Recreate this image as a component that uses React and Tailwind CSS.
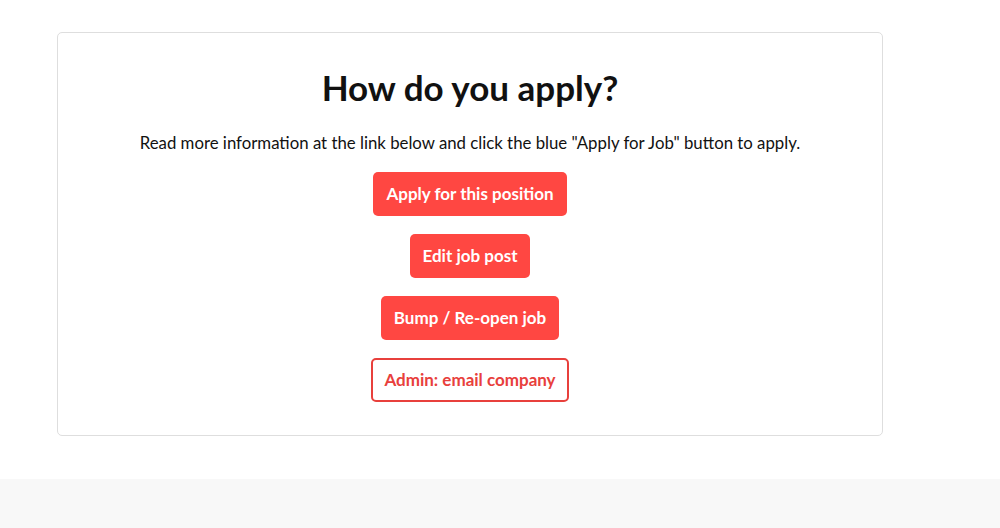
import React from 'react';

const buttons = [
  { label: 'Apply for this position', outline: false },
  { label: 'Edit job post', outline: false },
  { label: 'Bump / Re-open job', outline: false },
  { label: 'Admin: email company', outline: true },
];

export default function App() {
  return (
    <div className="min-h-[528px] bg-white flex flex-col" style={{ fontFamily: 'Lato, "Noto Sans", sans-serif' }}>
      <div className="h-[479px] pt-[32px] pl-[57px]">
        <div className="w-[826px] h-[404px] border border-[#dedede] rounded-[5px] bg-white flex flex-col items-center pt-[34px]">
          <h1 className="text-[35px] leading-[40px] font-bold text-[#111]">How do you apply?</h1>
          <p className="mt-[24px] text-[16.8px] leading-[24px] text-[#111]">
            Read more information at the link below and click the blue "Apply for Job" button to apply.
          </p>
          <div className="mt-[17px] flex flex-col items-center gap-[18px]">
            {buttons.map((b) => (
              <button
                key={b.label}
                type="button"
                className={
                  b.outline
                    ? 'h-[44px] px-[11px] rounded-[5px] border-2 border-[#e8403c] bg-white text-[#e8403c] text-[17px] font-bold'
                    : 'h-[44px] px-[13px] rounded-[5px] bg-[#ff4742] text-white text-[17px] font-bold'
                }
              >
                {b.label}
              </button>
            ))}
          </div>
        </div>
      </div>
      <div className="flex-1 bg-[#f8f8f8]" />
    </div>
  );
}
